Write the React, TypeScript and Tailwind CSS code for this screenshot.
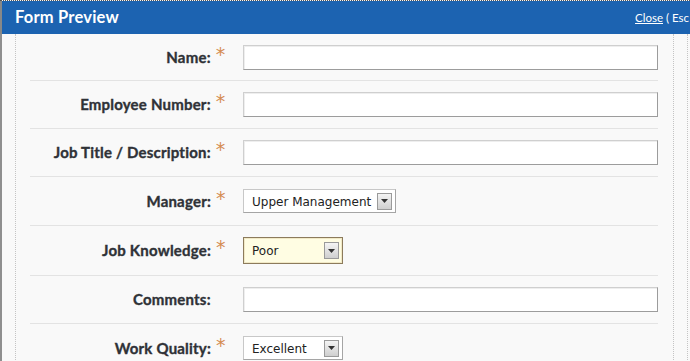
import React from "react";

type Row = {
  label: string;
  required: boolean;
  kind: "text" | "select";
  value?: string;
  width?: string;
  focused?: boolean;
};

const rows: Row[] = [
  { label: "Name:", required: true, kind: "text" },
  { label: "Employee Number:", required: true, kind: "text" },
  { label: "Job Title / Description:", required: true, kind: "text" },
  { label: "Manager:", required: true, kind: "select", value: "Upper Management", width: "w-[153px]" },
  { label: "Job Knowledge:", required: true, kind: "select", value: "Poor", width: "w-[100px]", focused: true },
  { label: "Comments:", required: false, kind: "text" },
  { label: "Work Quality:", required: true, kind: "select", value: "Excellent", width: "w-[100px]" },
];

const rowHeights = ["h-[47px]", "h-[48px]", "h-[48px]", "h-[49px]", "h-[50px]", "h-[48px]", "h-[48px]"];

const Arrow = () => (
  <div className="w-[15px] h-[17px] shrink-0 border border-[#9a9a9a] bg-gradient-to-b from-[#f4f4f4] to-[#cfcfcf] flex items-center justify-center">
    <svg width="7" height="4" viewBox="0 0 7 4">
      <path d="M0 0h7L3.5 4z" fill="#333" />
    </svg>
  </div>
);

const Field = ({ row }: { row: Row }) => {
  if (row.kind === "text") {
    return (
      <div className="w-[416px] h-[25px] bg-white border border-[#cfcfcf] border-b-[#9c9c9c] border-r-[#9c9c9c] shadow-[inset_1px_1px_0_#eee]" />
    );
  }
  return (
    <div
      className={`${row.width} flex items-center justify-between pl-[8px] pr-[3px] ${
        row.focused
          ? "h-[27px] border border-[#8c7b5c] bg-[#fffde3] shadow-[inset_0_0_0_1px_#f1e9c6]"
          : "h-[24px] border border-[#c8c8c8] border-b-[#a5a5a5] border-r-[#a5a5a5] bg-white"
      }`}
    >
      <span className="text-[12px] pt-[1px] text-[#222] whitespace-nowrap font-['DejaVu_Sans',sans-serif]">{row.value}</span>
      <Arrow />
    </div>
  );
};

export default function App() {
  return (
    <div className="w-[690px] h-[361px] overflow-hidden bg-[#f9f9f9] border-t border-dotted border-t-[#555] font-['Lato',sans-serif]">
      <div className="h-[33px] bg-[#1c63b1] flex items-center justify-between pl-[13px] border-l-2 border-[#888]">
        <span className="text-white font-bold text-[16.5px] tracking-[0.2px]">Form Preview</span>
        <span className="text-white text-[11.5px] whitespace-nowrap mr-[-5px]">
          <span className="underline">Close</span> ( Esc )
        </span>
      </div>
      <div className="flex h-full border-l-2 border-[#8f8f8f]">
        <div className="w-[13px] shrink-0" />
        <div className="w-[659px] border-l border-r border-dotted border-[#c4c4c4] pl-[14px] pr-[15px]">
          {rows.map((row, i) => (
            <div
              key={row.label}
              className={`flex items-center ${rowHeights[i]} ${i === 0 ? "pt-[1px]" : ""} ${
                i < rows.length - 1 ? "border-b border-[#e3e3e3]" : ""
              }`}
            >
              <div className="w-[181px] text-right text-[15px] font-bold text-[#2f3237] whitespace-nowrap tracking-[0.2px] [-webkit-text-stroke:0.35px_#2f3237]">
                {row.label}
              </div>
              <div className="w-[32px] pl-[5px] text-[19px] leading-none text-[#d58c52] font-['DejaVu_Sans',sans-serif] -mt-[6px]">
                {row.required ? "*" : ""}
              </div>
              <Field row={row} />
            </div>
          ))}
        </div>
        <div className="w-[14px] shrink-0 border-r border-dotted border-[#c4c4c4]" />
      </div>
    </div>
  );
}
